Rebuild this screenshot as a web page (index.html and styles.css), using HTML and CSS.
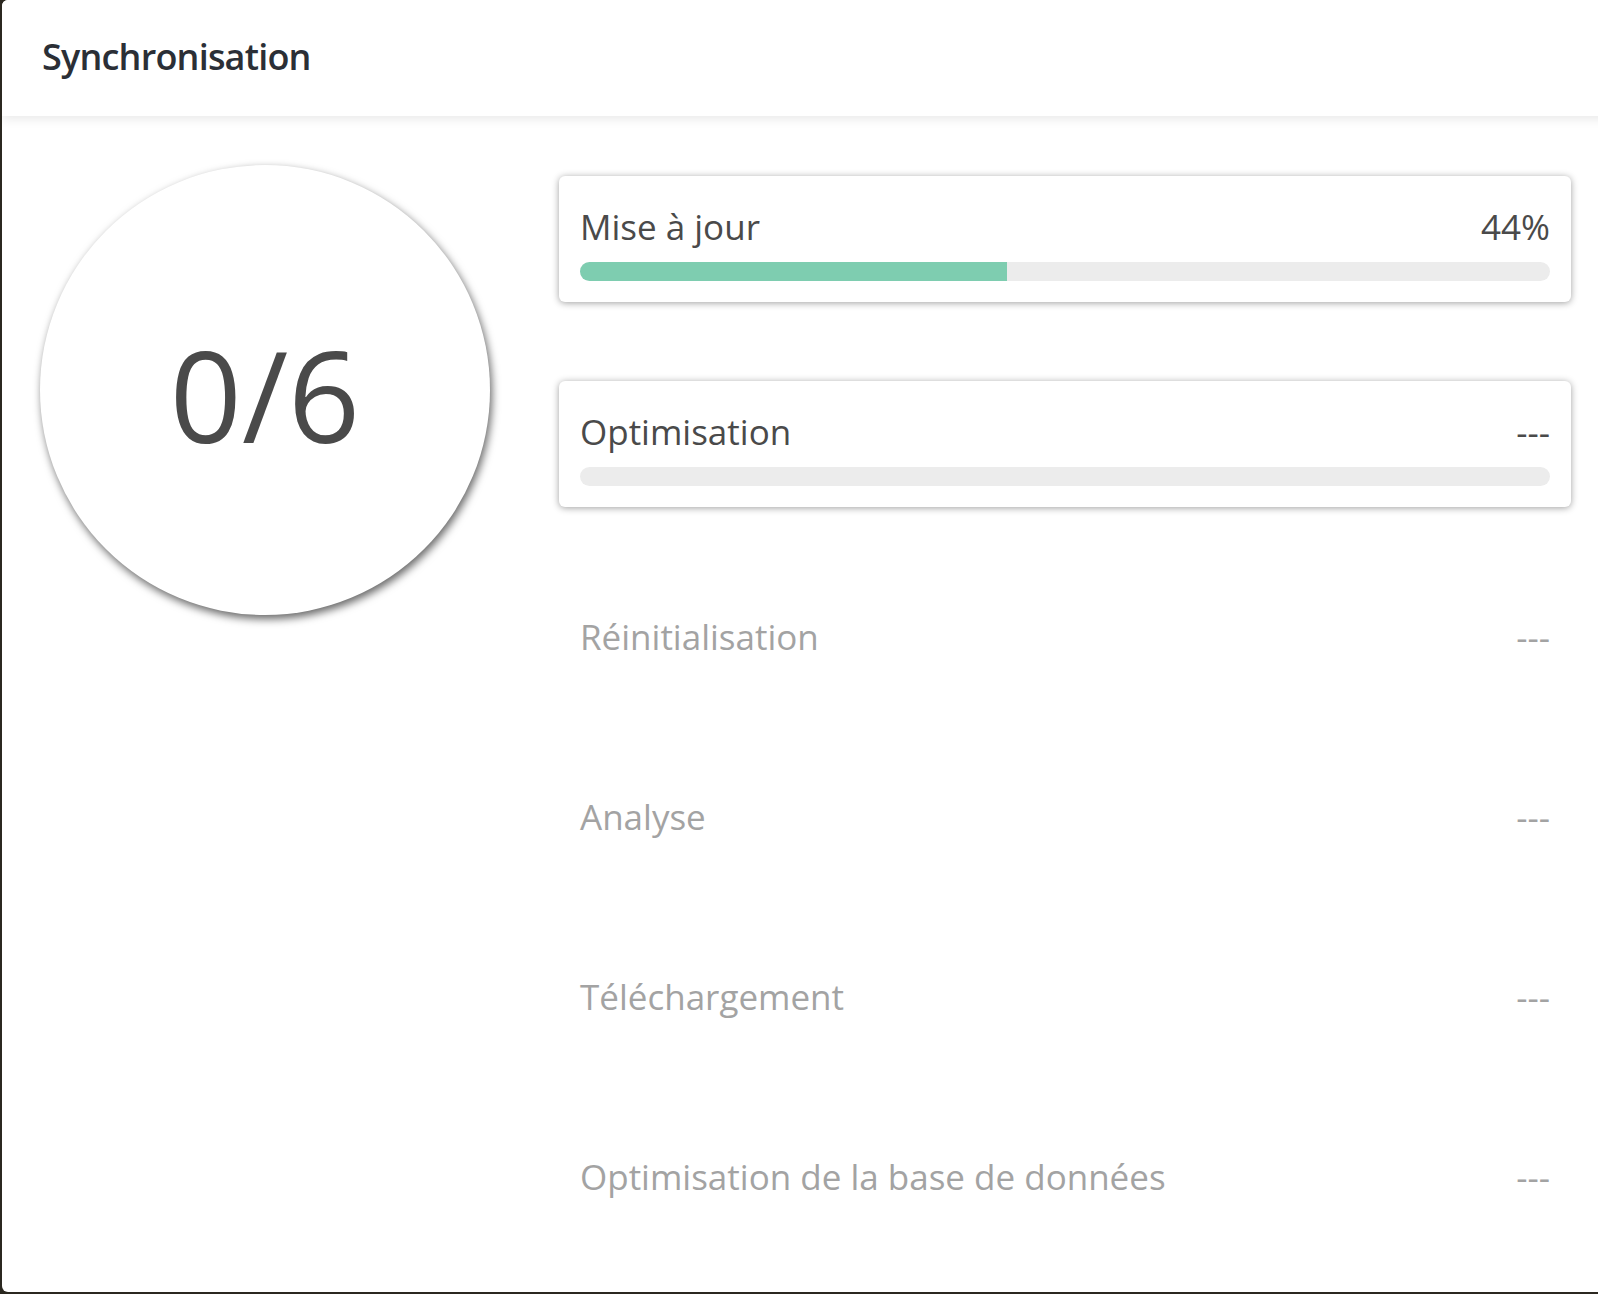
FILE: index.html
```html
<!DOCTYPE html>
<html lang="fr">
<head>
<meta charset="utf-8">
<title>Synchronisation</title>
<link rel="stylesheet" href="styles.css">
</head>
<body>
<div class="panel">
  <header class="panel-header">
    <h1 class="title">Synchronisation</h1>
  </header>
  <main class="content">
    <div class="counter-col">
      <div class="counter">0/6</div>
    </div>
    <ul class="steps">
      <li class="step active">
        <div class="step-head"><span class="step-name">Mise à jour</span><span class="step-value">44%</span></div>
        <div class="bar"><div class="bar-fill" style="width:44%"></div></div>
      </li>
      <li class="step active">
        <div class="step-head"><span class="step-name">Optimisation</span><span class="step-value">---</span></div>
        <div class="bar"></div>
      </li>
      <li class="step">
        <div class="step-head"><span class="step-name">Réinitialisation</span><span class="step-value">---</span></div>
      </li>
      <li class="step">
        <div class="step-head"><span class="step-name">Analyse</span><span class="step-value">---</span></div>
      </li>
      <li class="step">
        <div class="step-head"><span class="step-name">Téléchargement</span><span class="step-value">---</span></div>
      </li>
      <li class="step">
        <div class="step-head"><span class="step-name">Optimisation de la base de données</span><span class="step-value">---</span></div>
      </li>
    </ul>
  </main>
</div>
</body>
</html>
```
FILE: styles.css
```css
html, body {
  margin: 0;
  padding: 0;
  height: 100%;
  overflow: hidden;
}
body {
  background: #2b2820;
  font-family: "Open Sans", "Noto Sans", "Liberation Sans", sans-serif;
}
.panel {
  margin-left: 2px;
  width: 1620px;
  height: 1292px;
  background: #ffffff;
  border-radius: 6px;
  overflow: hidden;
  display: flex;
  flex-direction: column;
}
.panel-header {
  height: 116px;
  flex: none;
  display: flex;
  align-items: center;
  padding-left: 40px;
  background: #ffffff;
  box-shadow: 0 3px 10px rgba(0, 0, 0, 0.09);
  position: relative;
  z-index: 1;
}
.title {
  margin: 0;
  font-size: 36px;
  font-weight: 600;
  color: #2b2f36;
  letter-spacing: -0.8px;
  padding-bottom: 4px;
}
.content {
  display: flex;
  gap: 69px;
  padding: 49px 0 0 38px;
}
.counter-col {
  flex: none;
}
.counter {
  width: 450px;
  height: 450px;
  border-radius: 50%;
  background: #ffffff;
  box-shadow: 2px 4px 8px rgba(0, 0, 0, 0.6);
  display: flex;
  align-items: center;
  justify-content: center;
  font-size: 126px;
  font-weight: 400;
  color: #4a4a4a;
  line-height: 1;
  padding-top: 8px;
  box-sizing: border-box;
}
.steps {
  list-style: none;
  margin: 11px 0 0 0;
  padding: 0;
  width: 1012px;
  display: flex;
  flex-direction: column;
  gap: 79px;
}
.step {
  padding: 21px 21px 21px 21px;
  border-radius: 6px;
  color: #a3a3a3;
}
.step.active {
  color: #4a4a4a;
  box-shadow: 0 1px 7px rgba(0, 0, 0, 0.38);
}
.step-head {
  display: flex;
  justify-content: space-between;
  align-items: baseline;
  font-size: 35px;
  line-height: 59px;
}
.step-value {
  font-size: 35px;
}
.bar {
  margin-top: 6px;
  height: 19px;
  border-radius: 10px;
  background: #ececec;
  overflow: hidden;
}
.bar-fill {
  height: 100%;
  background: #7ecdb0;
}
```
